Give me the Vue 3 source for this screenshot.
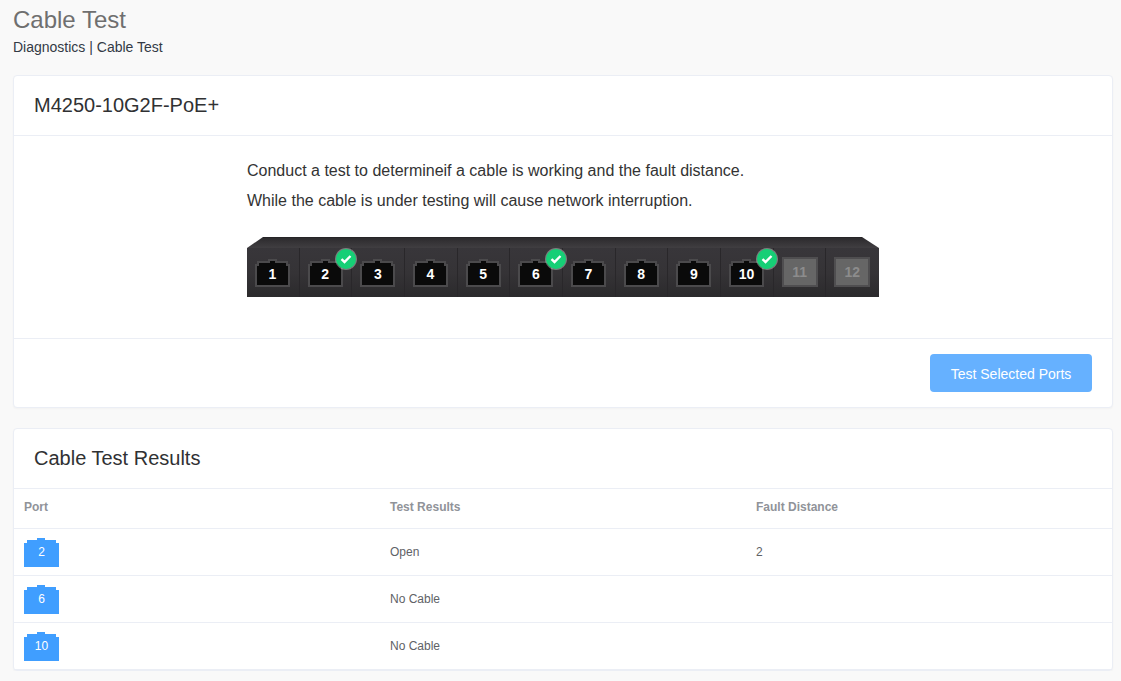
<template>
  <div class="page">
    <h1 class="title">Cable Test</h1>
    <div class="crumb">Diagnostics | Cable Test</div>

    <section class="card first">
      <div class="card-head">M4250-10G2F-PoE+</div>
      <div class="card-body">
        <p>Conduct a test to determineif a cable is working and the fault distance.</p>
        <p>While the cable is under testing will cause network interruption.</p>
        <div class="switch">
          <div class="switch-top"></div>
          <div class="ports">
            <div v-for="p in ports" :key="p.num" class="cell">
              <div class="port" :class="{ sfp: p.sfp }">
                <svg v-if="!p.sfp" class="jack" width="35" height="29" viewBox="0 0 35 29">
                  <path d="M1 28V7h2V4h11V2h7v2h11v3h2v21z" fill="#0a0a0a" stroke="#4b4a4c" stroke-width="2" />
                </svg>
                <span class="num">{{ p.num }}</span>
                <span v-if="p.selected" class="tick">
                  <svg width="12" height="10" viewBox="0 0 12 10">
                    <path d="M1.5 5.2 4.5 8 10.5 2" fill="none" stroke="#fff" stroke-width="2.4" />
                  </svg>
                </span>
              </div>
            </div>
          </div>
        </div>
      </div>
      <div class="card-foot">
        <button class="btn">Test Selected Ports</button>
      </div>
    </section>

    <section class="card">
      <div class="card-head">Cable Test Results</div>
      <table class="results">
        <thead>
          <tr>
            <th>Port</th>
            <th>Test Results</th>
            <th>Fault Distance</th>
          </tr>
        </thead>
        <tbody>
          <tr v-for="r in results" :key="r.port">
            <td>
              <div class="mini">
                <svg class="mini-shape" width="35" height="29" viewBox="0 0 35 29">
                  <path d="M0 29V5h3V2h10V0h8v2h11v3h3v24z" fill="#409eff" />
                </svg>
                <span>{{ r.port }}</span>
              </div>
            </td>
            <td>{{ r.result }}</td>
            <td>{{ r.distance }}</td>
          </tr>
        </tbody>
      </table>
    </section>
  </div>
</template>

<script setup>
const selected = [2, 6, 10]
const ports = Array.from({ length: 12 }, (_, i) => ({
  num: i + 1,
  sfp: i > 9,
  selected: selected.includes(i + 1)
}))

const results = [
  { port: 2, result: 'Open', distance: '2' },
  { port: 6, result: 'No Cable', distance: '' },
  { port: 10, result: 'No Cable', distance: '' }
]
</script>

<style>
html, body { margin: 0; background: #f9f9f9; }
</style>

<style scoped>
.page {
  padding: 6px 8px 0 13px;
  font-family: "Liberation Sans", Arial, sans-serif;
  color: #333;
}
.title { margin: 0; font-size: 24px; font-weight: 400; line-height: 28px; color: #6f6f6f; }
.crumb { margin-top: 4px; font-size: 14px; line-height: 18px; color: #333a45; }

.card {
  background: #fff;
  border: 1px solid #ebeef5;
  border-radius: 4px;
  box-shadow: 0 1px 2px rgba(0, 0, 0, .03);
  margin-top: 20px;
}
.card.first { margin-top: 19px; }
.card-head {
  height: 59px;
  line-height: 59px;
  padding: 0 20px;
  font-size: 20px;
  color: #303133;
  border-bottom: 1px solid #ebeef5;
}

.card-body { height: 202px; padding: 20px 233px 0; box-sizing: border-box; }
.card-body p { margin: 0; font-size: 16px; line-height: 30px; color: #333; white-space: nowrap; }

.switch {
  width: 632px;
  height: 60px;
  margin-top: 21px;
  background: linear-gradient(#fff 0, #fff 11px, #38363a 11px, #353336 60%, #2b2a2c 100%);
}
.switch-top {
  height: 11px;
  background: linear-gradient(#1f1e20 0, #2d2b2e 1px, #403e41 100%);
  clip-path: polygon(0 100%, 16px 0, calc(100% - 17px) 0, 100% 100%);
}
.ports { display: grid; grid-template-columns: repeat(12, 1fr); height: 49px; }
.cell { padding: 10px 0 0 8px; border-left: 1px solid #29272a; margin-left: -1px; }
.cell:first-child { border-left: 0; margin-left: 0; }

.port {
  position: relative;
  width: 35px;
  height: 29px;
  display: flex;
  align-items: center;
  justify-content: center;
}
.jack { position: absolute; inset: 0; }
.num { position: relative; font-size: 14px; font-weight: 700; color: #fff; padding-top: 3px; }
.sfp {
  width: 36px;
  height: 30px;
  margin-top: -1px;
  box-sizing: border-box;
  background: #666;
  border: 2px solid #4f4e50;
}
.sfp .num { color: #8c8c8c; padding-top: 0; }
.tick {
  position: absolute;
  top: -9px;
  left: 28px;
  width: 20px;
  height: 20px;
  border-radius: 50%;
  background: #16cf76;
  box-shadow: 0 0 0 1px rgba(255, 255, 255, .35);
  display: flex;
  align-items: center;
  justify-content: center;
}

.card-foot {
  border-top: 1px solid #ebeef5;
  height: 69px;
  box-sizing: border-box;
  padding: 15px 20px 0;
  display: flex;
  justify-content: flex-end;
}
.btn {
  width: 162px;
  height: 38px;
  padding: 2px 0 0;
  border: 0;
  border-radius: 4px;
  background: #66b1ff;
  color: #fff;
  font: 14px "Liberation Sans", Arial, sans-serif;
}

.results { width: 100%; border-collapse: collapse; table-layout: fixed; font-size: 12px; }
.results th {
  height: 39px;
  padding: 0 10px 2px;
  box-sizing: border-box;
  text-align: left;
  font-weight: 700;
  color: #909399;
  border-bottom: 1px solid #ebeef5;
}
.results td {
  height: 46px;
  padding: 0 10px;
  color: #606266;
  border-bottom: 1px solid #ebeef5;
}
.mini {
  position: relative;
  width: 35px;
  height: 29px;
  margin-top: 2px;
  color: #fff;
  text-align: center;
  line-height: 29px;
}
.mini-shape { position: absolute; inset: 0; }
.mini span { position: relative; }
</style>
